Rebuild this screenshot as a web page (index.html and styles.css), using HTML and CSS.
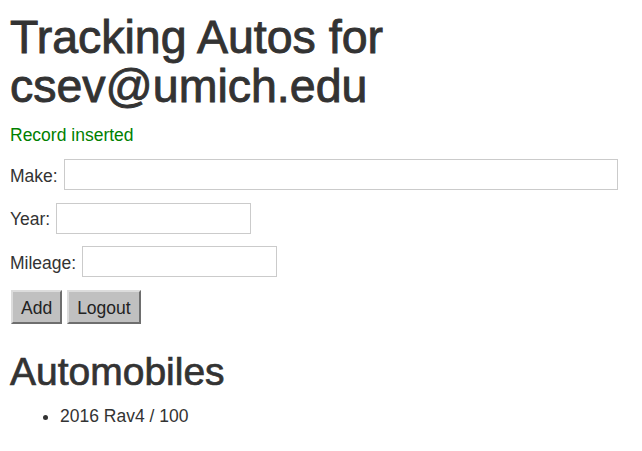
FILE: index.html
```html
<!DOCTYPE html>
<html>
<head>
<meta charset="utf-8">
<title>Tracking Autos</title>
<link rel="stylesheet" href="styles.css">
</head>
<body>
<h1 class="title">Tracking Autos for csev@umich.edu</h1>
<p class="flash">Record inserted</p>
<form class="auto-form">
  <p class="row"><label for="make">Make:</label><input class="field field-wide" type="text" id="make"></p>
  <p class="row"><label for="year">Year:</label><input class="field" type="text" id="year"></p>
  <p class="row"><label for="mileage">Mileage:</label><input class="field" type="text" id="mileage"></p>
  <p class="row buttons"><button class="btn" type="button">Add</button><button class="btn" type="button">Logout</button></p>
</form>
<h2 class="subtitle">Automobiles</h2>
<ul class="autos">
  <li>2016 Rav4 / 100</li>
</ul>
</body>
</html>
```
FILE: styles.css
```css
html, body {
  background: #fff;
}
body {
  margin: 0;
  padding: 13px 10px 0 10px;
  font-family: "Liberation Sans", Arial, sans-serif;
  font-size: 17.5px;
  line-height: 25px;
  color: #333;
}
.title {
  margin: 0 0 12.5px 0;
  font-size: 46.5px;
  line-height: 48.5px;
  font-weight: normal;
  color: #333;
  -webkit-text-stroke: 0.9px #333;
}
.flash {
  margin: 0 0 11.5px 0;
  color: #008000;
}
.auto-form {
  margin: 0;
}
.row {
  display: flex;
  align-items: center;
  gap: 6px;
  margin: 0 0 12.5px 0;
  height: 31px;
}
.row label {
  padding-top: 3px;
}
.field {
  box-sizing: border-box;
  width: 195px;
  height: 31px;
  border: 1px solid #cbcbcb;
  background: #fff;
  margin: 0;
  padding: 2px 4px;
  font: inherit;
}
.field-wide {
  width: 554px;
}
.buttons {
  height: 34px;
  gap: 5px;
  padding-left: 1px;
}
.btn {
  box-sizing: border-box;
  height: 34px;
  margin: 0;
  padding: 3px 8px 0 8px;
  background: #c0c0c0;
  border-style: solid;
  border-width: 2px;
  border-color: #dcdcdc #6e6e6e #6e6e6e #dcdcdc;
  font-family: "Liberation Sans", Arial, sans-serif;
  font-size: 17.5px;
  color: #222;
}
.subtitle {
  margin: 27px 0 12.5px 0;
  font-size: 39px;
  line-height: 41.25px;
  font-weight: normal;
  color: #333;
  -webkit-text-stroke: 0.7px #333;
}
.autos {
  margin: 0;
  padding-left: 50px;
}
```
